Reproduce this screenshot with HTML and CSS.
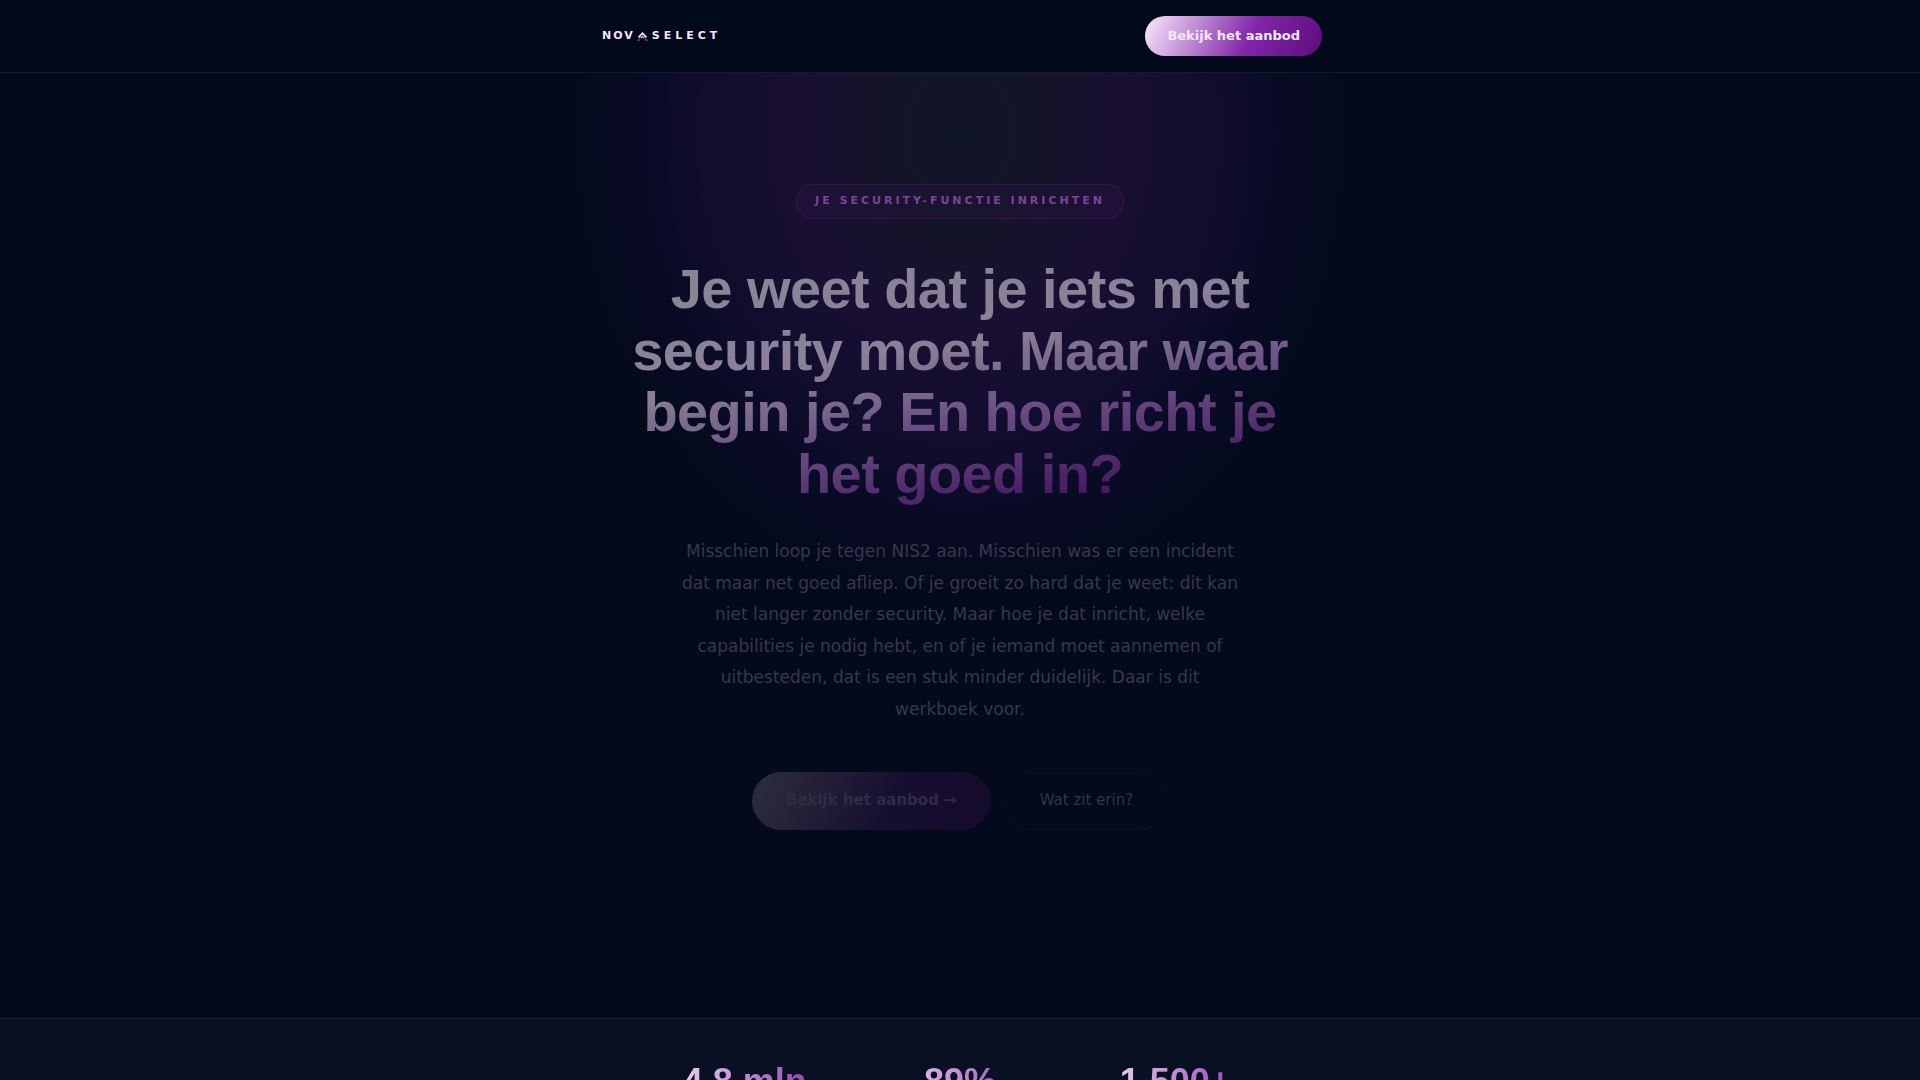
FILE: index.html
```html
<!DOCTYPE html>
<html lang="nl">
<head>
    <meta charset="UTF-8">
    <title>Novaselect - Je security-functie inrichten</title>
    <meta name="viewport" content="width=device-width, initial-scale=1.0">
    <link rel="stylesheet" href="styles.css">
</head>
<body>
    <header class="nav">
        <div class="nav-inner">
            <a href="#" class="logo" aria-label="Novaselect">
                <span class="logo-nova">NOV</span>
                <svg class="logo-mark" viewBox="0 0 10 8" aria-hidden="true">
                    <path d="M1.4 4.8 L5 1 L8.6 4.8" fill="none" stroke="#f5e6fa" stroke-width="1.5"/>
                    <path d="M3.4 5.4 L5 3.9 L6.6 5.4" fill="none" stroke="#d9b8e6" stroke-width="1.2"/>
                    <path d="M0 8 L1.6 5.8 L3.4 5.8 L2.2 8 Z M10 8 L8.4 5.8 L6.6 5.8 L7.8 8 Z" fill="#8e24aa"/>
                </svg>
                <span class="logo-select">SELECT</span>
            </a>
            <a href="#aanbod" class="btn-nav">Bekijk het aanbod</a>
        </div>
    </header>

    <main>
        <section class="hero">
            <div class="badge">Je security-functie inrichten</div>
            <h1>Je weet dat je iets met security moet. Maar waar begin je? En hoe richt je het goed in?</h1>
            <p class="hero-sub">Misschien loop je tegen NIS2 aan. Misschien was er een incident dat maar net goed afliep. Of je groeit zo hard dat je weet: dit kan niet langer zonder security. Maar hoe je dat inricht, welke capabilities je nodig hebt, en of je iemand moet aannemen of uitbesteden, dat is een stuk minder duidelijk. Daar is dit werkboek voor.</p>
            <div class="hero-actions">
                <a href="#aanbod" class="btn btn-primary">Bekijk het aanbod →</a>
                <a href="#inhoud" class="btn btn-ghost">Wat zit erin?</a>
            </div>
        </section>

        <section class="stats">
            <div class="stats-inner">
                <div class="stat">4,8 mln</div>
                <div class="stat">89%</div>
                <div class="stat">1.500+</div>
            </div>
        </section>
    </main>
</body>
</html>
```

FILE: styles.css
```css
* {
    box-sizing: border-box;
    margin: 0;
    padding: 0;
}

body {
    background-color: #030a1c;
    font-family: "DejaVu Sans", sans-serif;
    color: #f5e6fa;
}

a {
    color: inherit;
    text-decoration: none;
}

/* Navigation */
.nav {
    background-color: #02091a;
    border-bottom: 1px solid #141b2b;
}

.nav-inner {
    max-width: 820px;
    margin: 0 auto;
    padding: 16px 48px;
    display: flex;
    justify-content: space-between;
    align-items: center;
}

.logo {
    display: flex;
    align-items: center;
    padding-left: 4px;
    font-size: 11px;
    font-weight: bold;
    line-height: 12px;
}

.logo-nova {
    letter-spacing: 2px;
}

.logo-select {
    letter-spacing: 4px;
}

.logo-mark {
    width: 11px;
    height: 9px;
    margin: 0 4px 0 2px;
}

.btn-nav {
    background: linear-gradient(115deg, #f9eafc 0%, #8126a8 59%, #5e0c80 100%);
    border-radius: 50px;
    padding: 0 22px;
    font-size: 13px;
    font-weight: bold;
    line-height: 40px;
}

/* Hero */
.hero {
    padding: 111px 24px 188px;
    display: flex;
    flex-direction: column;
    align-items: center;
    text-align: center;
    background: radial-gradient(ellipse 400px 480px at 50% 60px, #101626 0%, #141429 20%, #190f32 42%, #120d2e 62%, #090b25 80%, #030a1c 100%);
}

.badge {
    border: 1px solid #34184f;
    border-radius: 50px;
    background-color: rgba(129, 38, 168, 0.06);
    color: #7c4597;
    padding: 0 18px 2px;
    font-size: 11px;
    font-weight: bold;
    letter-spacing: 3px;
    line-height: 31px;
    text-transform: uppercase;
}

h1 {
    max-width: 724px;
    margin-top: 39px;
    padding-bottom: 4px;
    font-family: "Liberation Sans", sans-serif;
    font-size: 56px;
    font-weight: bold;
    letter-spacing: -0.01em;
    line-height: 1.1;
    background: linear-gradient(170deg, #8a8696 0%, #8a8198 38%, #80728e 45%, #74648a 52%, #6a4d83 60%, #573571 72%, #471b63 84%, #430d65 100%);
    -webkit-background-clip: text;
    background-clip: text;
    color: transparent;
}

.hero-sub {
    max-width: 560px;
    margin-top: 28px;
    color: #38374b;
    font-size: 17px;
    line-height: 1.85;
}

.hero-actions {
    display: flex;
    gap: 14px;
    margin-top: 47px;
}

.btn {
    border-radius: 50px;
    padding: 0 34px 2px;
    font-size: 15px;
}

.btn-primary {
    background: linear-gradient(115deg, #2d2d3f 0%, #180f30 57%, #140b2c 100%);
    color: #2c2d43;
    font-weight: bold;
    line-height: 56px;
}

.btn-ghost {
    border: 1px solid #071023;
    color: #323447;
    line-height: 54px;
}

/* Stats */
.stats {
    padding: 45px 24px;
    background-color: #091024;
    border-top: 1px solid #171e2e;
}

.stats-inner {
    display: grid;
    grid-template-columns: repeat(3, 1fr);
    max-width: 646px;
    margin: 0 auto;
    text-align: center;
}

.stat {
    font-family: "Liberation Sans", sans-serif;
    font-size: 36px;
    font-weight: bold;
    line-height: 36px;
    background: linear-gradient(110deg, #f9eafc 10%, #8126a8 90%);
    -webkit-background-clip: text;
    background-clip: text;
    color: transparent;
}
```
